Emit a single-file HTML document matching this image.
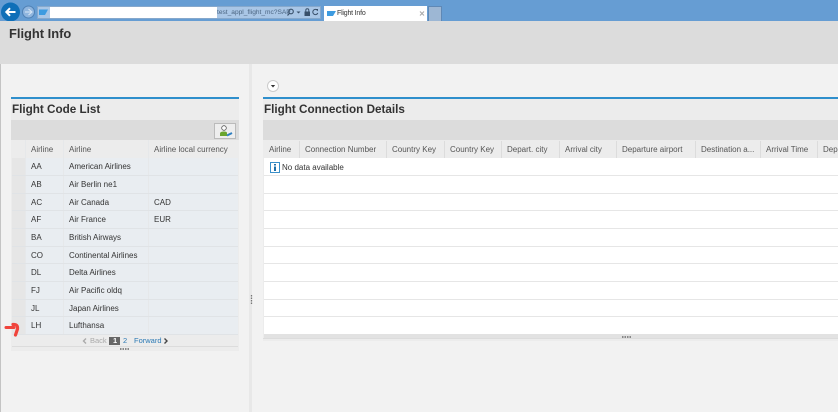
<!DOCTYPE html>
<html><head><meta charset="utf-8"><style>
html,body{margin:0;padding:0}
#p{position:relative;width:838px;height:412px;overflow:hidden;background:#f2f2f2;font-family:"Liberation Sans",sans-serif;color:#333}
#p div{position:absolute}
.t{font-size:8px;line-height:12px;white-space:nowrap}
.h{color:#555}
.b{font-weight:bold;font-size:11.7px;line-height:16px;color:#333;white-space:nowrap}
</style></head><body><div id="p">
<div style="left:0;top:0;width:838px;height:21px;background:#669dd3"></div>
<div style="left:37px;top:6px;width:284px;height:13px;background:#a9c6e6;border:1px solid #86a8cc;box-sizing:border-box"></div>
<div style="left:50px;top:7px;width:167px;height:11px;background:#fff"></div>
<div class="t" style="left:217px;top:6px;font-size:6.6px;color:#4a6480;line-height:13px">test_appl_flight_mc?SAP</div>
<svg style="position:absolute;left:0;top:0" width="838" height="22">
<circle cx="10.5" cy="12" r="9.5" fill="#0f6fb8"/>
<path d="M15.500 12H6.500M10 8.200L6.300 12L10 15.800" fill="none" stroke="#fff" stroke-width="2"/>
<circle cx="28.500" cy="12" r="6" fill="#8fb5de" stroke="#4f81b5"/>
<path d="M32 12H25M28.500 9L32 12L28.500 15" fill="none" stroke="#d8e6f5" stroke-width="1"/>
<path d="M39 9.500H48L45 15H39Z" fill="#3d9be0"/>
<circle cx="291" cy="11.500" r="2.300" fill="none" stroke="#39506a" stroke-width="1.100"/><path d="M289.500 13.200L287.500 15.500" stroke="#39506a" stroke-width="1.200"/>
<path d="M296.500 11.500H300.500L298.500 13.500Z" fill="#39506a"/>
<rect x="304.500" y="11.500" width="5.500" height="4.500" fill="#39506a"/><path d="M305.800 11.500V10.200A1.500 1.500 0 0 1 308.800 10.200V11.500" fill="none" stroke="#39506a"/>
<path d="M317.500 10.500A2.600 2.600 0 1 0 317.800 13" fill="none" stroke="#39506a" stroke-width="1"/><path d="M316 9L318 9V11.200Z" fill="#39506a"/>
</svg>
<div style="left:324px;top:6px;width:103px;height:15px;background:#fff"></div>
<svg style="position:absolute;left:324px;top:6px" width="103" height="15"><path d="M3 5H12L9 10H3Z" fill="#3d9be0"/><path d="M96 5.500L100 9.500M100 5.500L96 9.500" stroke="#aaa" stroke-width="1.100"/></svg>
<div class="t" style="left:337px;top:8px;font-size:7px;letter-spacing:-.2px;color:#333">Flight Info</div>
<div style="left:428px;top:6px;width:14px;height:15px;background:#9db7d4;border:1px solid #5f88b5;border-bottom:0;box-sizing:border-box"></div>

<div style="left:0;top:21px;width:838px;height:43px;background:#dcdcdc"></div>
<div class="b" style="left:9px;top:26px;font-size:12.900px">Flight Info</div>
<div style="left:0;top:64px;width:1px;height:348px;background:#c4c4c4"></div>
<div style="left:249px;top:64px;width:3px;height:348px;background:#e8e8e8"></div>
<svg style="position:absolute;left:250px;top:295px" width="3" height="10"><path d="M1.500 0V10" stroke="#777" stroke-width="1.300" stroke-dasharray="1.500 1"/></svg>

<!-- left panel -->
<div style="left:11px;top:97px;width:228px;height:254px;background:#ececec"></div>
<div style="left:11px;top:97px;width:228px;height:1.500px;background:#2f8fcc"></div>
<div class="b" style="left:12px;top:102px">Flight Code List</div>
<div style="left:11px;top:120px;width:228px;height:20px;background:#dcdcdc"></div>
<div style="left:214px;top:123px;width:22px;height:16px;background:#eee;border:1px solid #bbb;box-sizing:border-box"></div>
<svg style="position:absolute;left:214px;top:123px" width="22" height="16"><circle cx="10" cy="5" r="2.300" fill="#fff" stroke="#555" stroke-width=".8"/><path d="M6 13V10.500Q6 8.500 10 8.500Q13 8.500 13 10V13Z" fill="#6aa52e"/><path d="M13 12.500L18 10" stroke="#2f7fc0" stroke-width="2"/></svg>
<div style="left:12px;top:140px;width:226px;height:18px;background:#ececec"></div>
<div style="left:12px;top:158px;width:13px;height:176px;background:#e6e6e6"></div>
<div style="left:25px;top:158px;width:213px;height:176px;background:#e9edf1"></div>
<div style="left:25px;top:140px;width:1px;height:194px;background:#e6e8ea"></div>
<div style="left:63px;top:140px;width:1px;height:194px;background:#e6e8ea"></div>
<div style="left:148px;top:140px;width:1px;height:194px;background:#e6e8ea"></div>
<div class="t h" style="left:31px;top:144px">Airline</div>
<div class="t h" style="left:69px;top:144px">Airline</div>
<div class="t h" style="left:154px;top:144px">Airline local currency</div>
<div style="left:12px;top:175px;width:226px;height:1px;background:#e0e3e6"></div>
<div style="left:12px;top:193px;width:226px;height:1px;background:#e0e3e6"></div>
<div style="left:12px;top:210px;width:226px;height:1px;background:#e0e3e6"></div>
<div style="left:12px;top:228px;width:226px;height:1px;background:#e0e3e6"></div>
<div style="left:12px;top:246px;width:226px;height:1px;background:#e0e3e6"></div>
<div style="left:12px;top:263px;width:226px;height:1px;background:#e0e3e6"></div>
<div style="left:12px;top:281px;width:226px;height:1px;background:#e0e3e6"></div>
<div style="left:12px;top:299px;width:226px;height:1px;background:#e0e3e6"></div>
<div style="left:12px;top:316px;width:226px;height:1px;background:#e0e3e6"></div>
<div style="left:12px;top:334px;width:226px;height:1px;background:#e0e3e6"></div>
<div class="t" style="left:31px;top:161px">AA</div><div class="t" style="left:69px;top:161px">American Airlines</div>
<div class="t" style="left:31px;top:179px">AB</div><div class="t" style="left:69px;top:179px">Air Berlin ne1</div>
<div class="t" style="left:31px;top:197px">AC</div><div class="t" style="left:69px;top:197px">Air Canada</div><div class="t" style="left:154px;top:197px">CAD</div>
<div class="t" style="left:31px;top:214px">AF</div><div class="t" style="left:69px;top:214px">Air France</div><div class="t" style="left:154px;top:214px">EUR</div>
<div class="t" style="left:31px;top:232px">BA</div><div class="t" style="left:69px;top:232px">British Airways</div>
<div class="t" style="left:31px;top:250px">CO</div><div class="t" style="left:69px;top:250px">Continental Airlines</div>
<div class="t" style="left:31px;top:267px">DL</div><div class="t" style="left:69px;top:267px">Delta Airlines</div>
<div class="t" style="left:31px;top:285px">FJ</div><div class="t" style="left:69px;top:285px">Air Pacific oldq</div>
<div class="t" style="left:31px;top:303px">JL</div><div class="t" style="left:69px;top:303px">Japan Airlines</div>
<div class="t" style="left:31px;top:320px">LH</div><div class="t" style="left:69px;top:320px">Lufthansa</div>
<svg style="position:absolute;left:0;top:315px" width="24" height="26">
<path d="M6 12.500H14" fill="none" stroke="#f0443c" stroke-width="3" stroke-linecap="round"/>
<path d="M13 9.500Q18 9 17.500 14Q16.500 17 15.500 20" fill="none" stroke="#f0443c" stroke-width="3.200" stroke-linecap="round"/>
</svg>
<svg style="position:absolute;left:80px;top:335px" width="100" height="12"><path d="M6 3.500L3.500 6L6 8.500" fill="none" stroke="#aaa" stroke-width="1.400"/><path d="M87 3.500L84.500 1" fill="none"/><path d="M84.500 3.500L87 6L84.500 8.500" fill="none" stroke="#444" stroke-width="1.400"/></svg>
<div class="t" style="left:90px;top:335px;color:#aaa;font-size:7.500px">Back</div>
<div style="left:109px;top:337px;width:11px;height:7.500px;background:#666"></div>
<div class="t" style="left:113px;top:335px;color:#fff;font-weight:bold;font-size:7.500px">1</div>
<div class="t" style="left:123px;top:335px;color:#2c7ab5;font-size:7.500px">2</div>
<div class="t" style="left:134px;top:335px;color:#2c7ab5;font-size:7.500px">Forward</div>
<div style="left:12px;top:346px;width:226px;height:1px;background:#dcdcdc"></div>
<div style="left:120px;top:347.500px;width:10px;height:2px;background:repeating-linear-gradient(90deg,#888 0 1.500px,transparent 1.500px 2.500px)"></div>

<!-- right panel -->
<svg style="position:absolute;left:266px;top:79px" width="14" height="14"><circle cx="7" cy="7" r="5.500" fill="#fff" stroke="#ccc"/><path d="M4.800 6H9.200L7 8.500Z" fill="#333"/></svg>
<div style="left:263px;top:97px;width:575px;height:244px;background:#ececec"></div>
<div style="left:263px;top:97px;width:575px;height:1.500px;background:#2f8fcc"></div>
<div class="b" style="left:264px;top:102px">Flight Connection Details</div>
<div style="left:263px;top:120px;width:575px;height:20px;background:#dcdcdc"></div>
<div style="left:264px;top:140px;width:574px;height:18px;background:#ececec"></div>
<div style="left:264px;top:158px;width:574px;height:176px;background:#fff"></div>
<div style="left:299px;top:141px;width:1px;height:17px;background:#dcdcdc"></div>
<div style="left:386px;top:141px;width:1px;height:17px;background:#dcdcdc"></div>
<div style="left:444px;top:141px;width:1px;height:17px;background:#dcdcdc"></div>
<div style="left:501px;top:141px;width:1px;height:17px;background:#dcdcdc"></div>
<div style="left:559px;top:141px;width:1px;height:17px;background:#dcdcdc"></div>
<div style="left:616px;top:141px;width:1px;height:17px;background:#dcdcdc"></div>
<div style="left:695px;top:141px;width:1px;height:17px;background:#dcdcdc"></div>
<div style="left:760px;top:141px;width:1px;height:17px;background:#dcdcdc"></div>
<div style="left:817px;top:141px;width:1px;height:17px;background:#dcdcdc"></div>
<div class="t h" style="left:269px;top:144px">Airline</div>
<div class="t h" style="left:305px;top:144px">Connection Number</div>
<div class="t h" style="left:392px;top:144px">Country Key</div>
<div class="t h" style="left:450px;top:144px">Country Key</div>
<div class="t h" style="left:507px;top:144px">Depart. city</div>
<div class="t h" style="left:565px;top:144px">Arrival city</div>
<div class="t h" style="left:622px;top:144px">Departure airport</div>
<div class="t h" style="left:701px;top:144px">Destination a...</div>
<div class="t h" style="left:766px;top:144px">Arrival Time</div>
<div class="t h" style="left:823px;top:144px">Departure</div>
<div style="left:264px;top:175px;width:574px;height:1px;background:#e6e6e6"></div>
<div style="left:264px;top:193px;width:574px;height:1px;background:#e6e6e6"></div>
<div style="left:264px;top:210px;width:574px;height:1px;background:#e6e6e6"></div>
<div style="left:264px;top:228px;width:574px;height:1px;background:#e6e6e6"></div>
<div style="left:264px;top:246px;width:574px;height:1px;background:#e6e6e6"></div>
<div style="left:264px;top:263px;width:574px;height:1px;background:#e6e6e6"></div>
<div style="left:264px;top:281px;width:574px;height:1px;background:#e6e6e6"></div>
<div style="left:264px;top:299px;width:574px;height:1px;background:#e6e6e6"></div>
<div style="left:264px;top:316px;width:574px;height:1px;background:#e6e6e6"></div>
<svg style="position:absolute;left:270px;top:162px" width="10" height="11"><rect x=".5" y=".5" width="9" height="10" fill="#fff" stroke="#3a8fc9"/><rect x="4" y="2" width="2" height="1.500" fill="#1c6ea8"/><rect x="4" y="4.500" width="2" height="4.500" fill="#1c6ea8"/></svg>
<div class="t" style="left:282px;top:162px;color:#333">No data available</div>
<div style="left:264px;top:334px;width:574px;height:4px;background:#e2e2e2"></div>
<div style="left:263px;top:338px;width:575px;height:1px;background:#dcdcdc"></div>
<div style="left:622px;top:335.500px;width:10px;height:2px;background:repeating-linear-gradient(90deg,#888 0 1.500px,transparent 1.500px 2.500px)"></div>
</div></body></html>
